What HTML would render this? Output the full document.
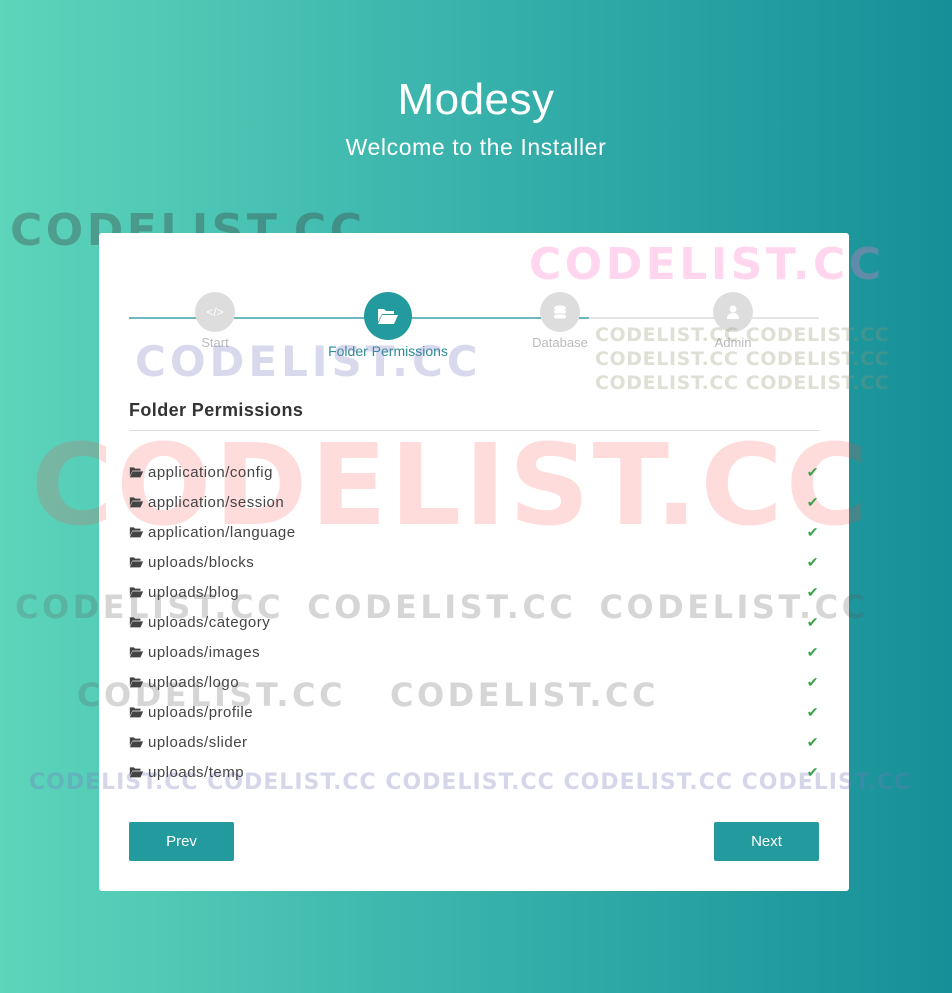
<!DOCTYPE html>
<html><head><meta charset="utf-8"><style>
*{margin:0;padding:0;box-sizing:border-box}
body{width:952px;height:993px;overflow:hidden;position:relative;font-family:"Liberation Sans",sans-serif;background:linear-gradient(90deg,#5dd5bb 0%,#3bb5ad 45%,#168f98 100%)}
h1{position:absolute;top:75px;width:100%;text-align:center;color:#fff;font-size:44px;font-weight:normal;letter-spacing:0.5px}
.sub{position:absolute;top:134px;width:100%;text-align:center;color:#fff;font-size:23px;letter-spacing:0.6px}
.card{position:absolute;left:99px;top:233px;width:750px;height:658px;background:#fff;border-radius:3px}
.line{position:absolute;top:84px;height:2px}
.circ{position:absolute;border-radius:50%;background:#ddd;display:flex;align-items:center;justify-content:center;color:#fff;font-size:12px}
.lbl{position:absolute;font-size:13px;color:#bbb;transform:translateX(-50%);white-space:nowrap}
h3{position:absolute;left:30px;top:167px;font-size:18px;color:#333;letter-spacing:0.4px}
.hr{position:absolute;left:30px;right:30px;top:197px;height:1px;background:#ddd}
.row{position:absolute;left:30px;right:30px;height:20px;font-size:15px;color:#444;display:flex;align-items:center;letter-spacing:0.5px}
.row svg{margin-right:4px}
.row .ck{position:absolute;right:0;color:#3aa34a;font-size:14px}
.btn{position:absolute;top:589px;width:105px;height:39px;background:#239a9e;color:#fff;font-size:15px;display:flex;align-items:center;justify-content:center;border-radius:2px}
.wm{position:absolute;font-weight:bold;white-space:nowrap;font-family:"DejaVu Sans","Liberation Sans",sans-serif}
</style></head><body>
<h1>Modesy</h1>
<div class="sub">Welcome to the Installer</div>
<div class="wm" style="left:10px;top:205px;font-size:44px;letter-spacing:3.5px;color:rgba(60,60,60,0.35)">CODELIST.CC</div>
<div class="card">
<div class="wm" style="left:430px;top:6px;font-size:44px;letter-spacing:3.5px;color:rgba(255,120,200,0.3)">CODELIST.CC</div>
<div class="line" style="left:30px;width:460px;background:#6cb8be"></div>
<div class="line" style="left:490px;width:230px;background:#e5e5e5"></div>
<div class="circ" style="left:96px;top:59px;width:40px;height:40px">&lt;/&gt;</div>
<div class="circ" style="left:265px;top:59px;width:48px;height:48px;background:#239a9e"><svg width="22" height="18" viewBox="0 0 22 18"><path d="M1 2h6l2 2h8v3H5L1 15z" fill="#fff"/><path d="M5 8h16l-4 9H1z" fill="#fff"/></svg></div>
<div class="circ" style="left:441px;top:59px;width:40px;height:40px"><svg width="12" height="14"><ellipse cx="6" cy="3" rx="6" ry="2.5" fill="#fff"/><rect y="5" width="12" height="3.5" rx="2" fill="#fff"/><rect y="9.5" width="12" height="4" rx="2" fill="#fff"/></svg></div>
<div class="circ" style="left:614px;top:59px;width:40px;height:40px"><svg width="12" height="14"><circle cx="6" cy="4" r="3.5" fill="#fff"/><path d="M0 14q0-6 6-6t6 6z" fill="#fff"/></svg></div>
<div class="lbl" style="left:116px;top:102px">Start</div>
<div class="lbl" style="left:289px;top:110px;color:#2b8d96;font-size:14px">Folder Permissions</div>
<div class="lbl" style="left:461px;top:102px">Database</div>
<div class="lbl" style="left:634px;top:102px">Admin</div>
<div class="wm" style="left:36px;top:104px;font-size:42px;letter-spacing:4px;color:rgba(120,120,190,0.28)">CODELIST.CC</div>
<div class="wm" style="left:496px;top:90px;font-size:19px;line-height:24px;letter-spacing:0.6px;color:rgba(150,150,120,0.3)">CODELIST.CC CODELIST.CC<br>CODELIST.CC CODELIST.CC<br>CODELIST.CC CODELIST.CC</div>
<h3>Folder Permissions</h3>
<div class="hr"></div>
<div class="wm" style="left:-68px;top:188px;font-size:112px;letter-spacing:3px;color:rgba(255,60,60,0.18)">CODELIST.CC</div>
<div class="wm" style="left:-84px;top:355px;font-size:32px;letter-spacing:3.5px;word-spacing:-10px;color:rgba(90,90,90,0.25)">CODELIST.CC &nbsp;&nbsp;&nbsp;&nbsp;CODELIST.CC &nbsp;&nbsp;&nbsp;&nbsp;CODELIST.CC</div>
<div class="wm" style="left:-22px;top:443px;font-size:32px;letter-spacing:3.5px;color:rgba(90,90,90,0.25)">CODELIST.CC &nbsp;&nbsp;CODELIST.CC</div>
<div class="wm" style="left:-70px;top:537px;font-size:22px;letter-spacing:1px;color:rgba(120,120,190,0.3)">CODELIST.CC CODELIST.CC CODELIST.CC CODELIST.CC CODELIST.CC</div>
<div id="rows"></div>
<div class="btn" style="left:30px">Prev</div>
<div class="btn" style="left:615px">Next</div>
</div>
<script>
var n=["application/config","application/session","application/language","uploads/blocks","uploads/blog","uploads/category","uploads/images","uploads/logo","uploads/profile","uploads/slider","uploads/temp"],h="";
n.forEach(function(t,i){h+='<div class="row" style="top:'+(229+i*30)+'px"><svg width="15" height="12" viewBox="0 0 22 18"><path d="M1 2h6l2 2h8v3H5L1 15z" fill="#444"/><path d="M5 8h16l-4 9H1z" fill="#444"/></svg>'+t+'<span class="ck">&#10004;</span></div>';});
document.getElementById("rows").innerHTML=h;
</script>
</body></html>
